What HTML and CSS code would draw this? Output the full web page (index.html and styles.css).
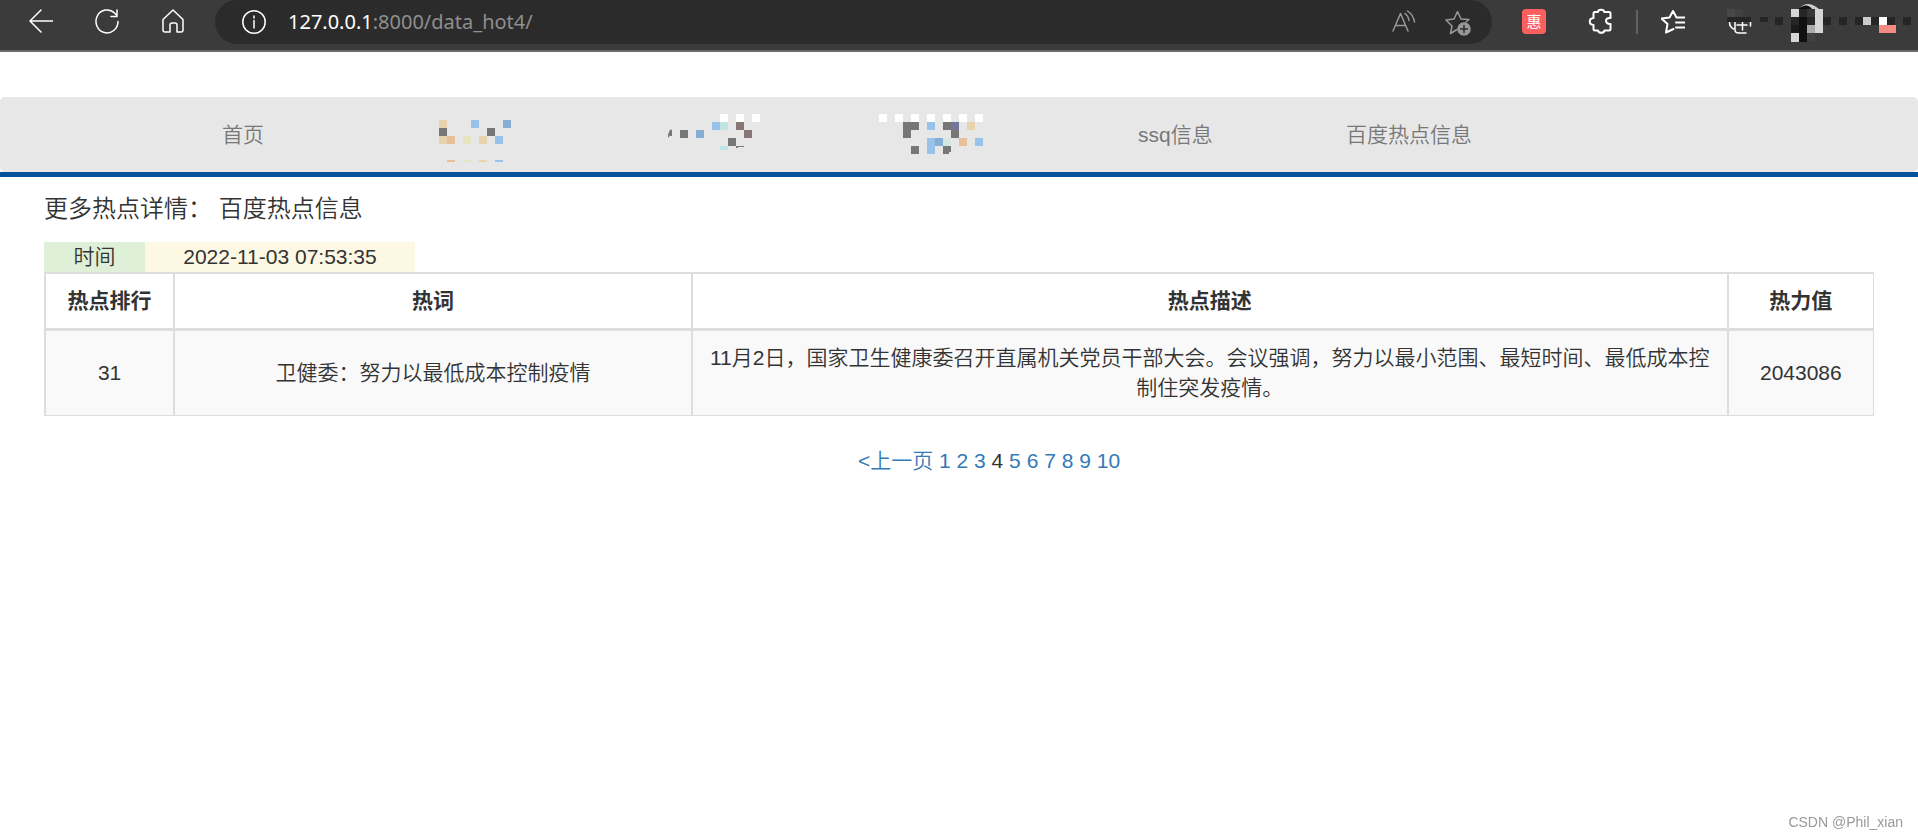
FILE: index.html
```html
<!DOCTYPE html>
<html lang="zh-CN">
<head>
<meta charset="utf-8">
<title>百度热点信息</title>
<link rel="stylesheet" href="styles.css">
</head>
<body>
<header class="toolbar">
  <div class="tools">
    <button class="tool" aria-label="后退"><svg width="24" height="42" viewBox="0 0 24 42"><path d="M12 10L1 21l11 11M1 21h23"/></svg></button>
    <button class="tool" aria-label="刷新"><svg width="24" height="42" viewBox="0 0 24 42"><path d="M23 21.500a11 11.500 0 1 1-3.500-8.500l2.500 2.500M22 10v6.500h-6"/></svg></button>
    <button class="tool" aria-label="主页"><svg width="24" height="42" viewBox="0 0 24 42"><path d="M2 19.500L12 10l10 9.500V30a2 2 0 0 1-2 2h-4v-7a2 2 0 0 0-2-2h-3a2 2 0 0 0-2 2v7H4a2 2 0 0 1-2-2z"/></svg></button>
  </div>
  <div class="address">
    <button class="tool" aria-label="网站信息"><svg width="24" height="42" viewBox="0 0 24 42"><circle cx="12" cy="21" r="11.200"/><path d="M12 19.500V27M12 15v2"/></svg></button>
    <div class="url" role="textbox" aria-label="地址"><span class="host">127.0.0.1</span>:8000/data_hot4/</div>
    <div class="address-end">
      <button class="tool dim" aria-label="朗读"><svg width="24" height="42" viewBox="0 0 24 42"><path d="M1 30L8.500 12.500 16 30M3.500 24.500h10M13 12.500q3.500 2.500 4 7M15.500 10q6 4 7 11"/></svg></button>
      <button class="tool dim" aria-label="收藏"><svg width="26" height="42" viewBox="0 0 26 42"><path d="M12 28.500l-6.500 4L7 25 1 19l8-1L12.500 10.500l3.500 7.500 8 .5-3 2.500"/><circle class="badge" cx="19" cy="28" r="6"/><path class="badge-plus" d="M19 24.500v7M15.500 28h7"/></svg></button>
    </div>
  </div>
  <button class="tool shop" aria-label="惠"><span class="shop-tile">惠</span></button>
  <button class="tool puzzle" aria-label="扩展"><svg width="24" height="42" viewBox="0 0 24 42"><path class="bold" d="M6.500 12H10c.2-3 6-3 6.200 0H21a1.500 1.500 0 0 1 1.500 1.500V18c-6-1-6 6.500 0 6V29a1.500 1.500 0 0 1-1.500 1.500h-4.500c-.5 3-6 3-6.500 0H7A1.500 1.500 0 0 1 5.500 29v-4c-5-.5-5-6.500 0-7v-4.500A1.500 1.500 0 0 1 6.500 12z"/></svg></button>
  <span class="divider"></span>
  <button class="tool favorites" aria-label="收藏夹"><svg width="24" height="42" viewBox="0 0 24 42"><path class="bold" d="M12.500 29L5 32.500l1.500-8.500L.5 18.500l8-1L12 11l3.500 6.500H24M15 22.500h9M15 27.500h9"/></svg></button>
  <svg class="profile" width="198" height="50" viewBox="0 0 198 50" aria-hidden="true">
    <path class="line" d="M9.500 22q0 5 4 7M15 22v8q0 3 4 3h7M22.500 20v10M17 25h10M30.500 22v4"/>
    <path fill="#474747" d="M7 9h8v8H7z"/><path fill="#404040" d="M15 9h8v8h-8z"/>
    <path fill="#252525" d="M7 17h24v5H7zM40 17h8v5h-8zM55 17h8v8h-8zM103 17h8v8h-8zM119 17h8v8h-8zM135 17h8v8h-8zM151 17h8v8h-8zM167 17h8v8h-8zM183 17h8v8h-8z"/>
    <path fill="#ccc" d="M79 9Q87-1 99 9z"/><path fill="#111" d="M78 9q9-7 14 0z"/>
    <path fill="#d5d5d5" d="M71 9h8v8h-8zM71 33h8v9h-8zM95 9h8v24h-8z"/>
    <path fill="#262626" d="M71 17h24v8H71zM79 9h8v8h-8z"/><path fill="#1a1a1a" d="M71 25h8v8h-8z"/>
    <path fill="#101010" d="M79 17h8v25h-8z"/><path fill="#363636" d="M87 9h8v8h-8z"/>
    <path fill="#aaa" d="M87 25h8v8h-8z"/><path fill="#424242" d="M87 33h8v8h-8z"/>
    <path fill="#ccc" d="M143 17h8v8h-8z"/><path fill="#fff" d="M159 17h8v8h-8z"/><path fill="#f28b82" d="M159 25h17v8h-17z"/>
  </svg>
</header>

<nav class="nav">
  <a class="nav-link" href="#">首页</a>
  <a class="nav-link" href="#" aria-label="菜单二"><svg width="74" height="54" viewBox="0 -12 74 54">
    <path fill="#e7d4ae" d="M0 0h8v8H0zM0 16h8v8H0zM40 16h8v8h-8zM40 40h8v2h-8z"/>
    <path fill="#e6c098" d="M8 16h8v8H8zM8 40h8v2H8z"/><path fill="#e5e5c0" d="M24 16h8v8h-8zM24 40h8v2h-8z"/>
    <path fill="#777" d="M0 8h8v8H0zM48 8h8v8h-8z"/>
    <path fill="#99c2ea" d="M32 0h8v8h-8zM56 16h8v8h-8zM56 40h8v2h-8z"/><path fill="#87add5" d="M64 0h8v8h-8z"/></svg></a>
  <a class="nav-link" href="#" aria-label="菜单三"><svg width="94" height="46" viewBox="0 0 94 46">
    <path fill="none" stroke="#777" stroke-width="2" d="M0 25l3-7v6"/>
    <path fill="#fff" d="M52 2h8v8h-8zM68 2h8v8h-8zM84 2h8v8h-8z"/>
    <path fill="#99c2ea" d="M44 10h8v8h-8z"/><path fill="#87add5" d="M28 18h8v8h-8z"/>
    <path fill="#c0e5e5" d="M52 10h8v8h-8zM52 34h8v4h-8z"/>
    <path fill="#777" d="M12 18h8v8h-8zM60 26h8v8h-8z"/><path fill="#877675" d="M68 10h8v8h-8zM76 18h8v8h-8zM68 34h8v1h-6v1h-2z"/></svg></a>
  <a class="nav-link" href="#" aria-label="菜单四"><svg width="106" height="46" viewBox="0 0 106 46">
    <path fill="#fff" d="M0 2h8v8H0zM16 2h8v8h-8zM32 2h8v8h-8zM48 2h8v8h-8zM64 2h8v8h-8zM80 2h8v8h-8zM96 2h8v8h-8z"/>
    <path fill="#777" d="M24 10h16v8h-8v8h-8zM64 10h8v8h-8zM72 18h8v8h-8zM32 34h8v8h-8zM64 34h8v6h-2v2h-6z"/>
    <path fill="#76769d" d="M72 10h8v8h-8z"/><path fill="#e7d4ae" d="M88 10h8v8h-8z"/>
    <path fill="#99c2ea" d="M48 10h8v8h-8zM48 26h8v16h-8zM96 26h8v8h-8z"/><path fill="#87add5" d="M56 26h8v8h-8z"/>
    <path fill="#d5e6e4" d="M64 26h8v8h-8z"/><path fill="#e6c098" d="M80 26h8v8h-8z"/></svg></a>
  <a class="nav-link" href="#">ssq信息</a>
  <a class="nav-link" href="#">百度热点信息</a>
</nav>

<main class="content">
  <h1 class="title">更多热点详情： 百度热点信息</h1>
  <div class="stamp"><span class="stamp-label">时间</span><span class="stamp-value">2022-11-03 07:53:35</span></div>
  <table class="hot">
    <colgroup><col class="c-rank"><col class="c-word"><col class="c-desc"><col class="c-heat"></colgroup>
    <thead><tr><th>热点排行</th><th>热词</th><th>热点描述</th><th>热力值</th></tr></thead>
    <tbody><tr><td>31</td><td>卫健委：努力以最低成本控制疫情</td><td>11月2日，国家卫生健康委召开直属机关党员干部大会。会议强调，努力以最小范围、最短时间、最低成本控制住突发疫情。</td><td>2043086</td></tr></tbody>
  </table>
  <div class="pages">
    <a href="#">&lt;上一页</a>
    <a href="#">1</a>
    <a href="#">2</a>
    <a href="#">3</a>
    <span>4</span>
    <a href="#">5</a>
    <a href="#">6</a>
    <a href="#">7</a>
    <a href="#">8</a>
    <a href="#">9</a>
    <a href="#">10</a>
  </div>
</main>
<div class="watermark">CSDN @Phil_xian</div>
</body>
</html>
```
FILE: styles.css
```css
* { box-sizing: border-box; }

body {
  margin: 0;
  background: #fff;
  color: #333;
  font: 350 21px/30px "Liberation Sans", "Noto Sans CJK SC", sans-serif;
}

a { color: #337ab7; text-decoration: none; }

/* browser bar */
.toolbar {
  display: flex;
  align-items: flex-start;
  height: 52px;
  background: #3b3b3b;
  border-bottom: 2px solid #6b6b6b;
}
.tools { display: flex; gap: 42px; padding: 0 30px 0 29px; }
.tool {
  flex: none;
  display: block;
  padding: 0;
  border: 0;
  background: none;
  font: inherit;
}
.tool svg, .profile { display: block; }
.tool path, .tool circle, .profile .line {
  fill: none;
  stroke: #fff;
  stroke-width: 1.5;
  stroke-linecap: round;
  stroke-linejoin: round;
}
.tool .bold { stroke-width: 2; }
.dim path, .dim circle { stroke: #999; }
.tool .badge { fill: #999; }
.tool .badge-plus { stroke: #2b2b2b; }
.address {
  flex: 1;
  display: flex;
  height: 44px;
  padding: 0 21px 0 27px;
  background: #2b2b2b;
  border-radius: 22px;
}
.url {
  flex: 1;
  padding-left: 22px;
  color: #8f8f8f;
  font: 400 20px/43px "Noto Sans", sans-serif;
}
.host { color: #fff; }
.address-end { display: flex; gap: 29px; }
.shop { margin: 9px 42px 0 30px; }
.shop-tile {
  display: block;
  width: 24px;
  height: 25px;
  border-radius: 4px;
  background: #fb5f60;
  color: #fff;
  font: 400 15px/24px "Noto Sans CJK SC", sans-serif;
  text-align: center;
}
.divider { flex: none; width: 2px; height: 24px; margin: 10px 23px 0 24px; background: #626262; }
.favorites { margin-right: 35px; }
.profile { flex: none; }

/* site navigation */
.nav {
  display: grid;
  grid-template-columns: 217fr 229fr 211fr 259fr 208fr 350fr;
  align-items: center;
  height: 75px;
  margin-top: 45px;
  padding: 0 222px;
  background: #e7e7e7;
  border-radius: 5px;
}
.nav-link { color: #777; }
.nav-link svg { display: block; }
.content { padding: 0 44px; border-top: 5px solid #00529b; }

.title {
  margin: 0;
  padding: 17px 0 18px;
  font-size: 24px;
  font-weight: 350;
  line-height: 30px;
}
.stamp { display: flex; text-align: center; }
.stamp-label { width: 101px; background: #dff0d8; }
.stamp-value { width: 270px; background: #fcf8e3; }

.hot {
  width: 100%;
  table-layout: fixed;
  border-collapse: separate;
  border-spacing: 0;
  border: solid #ddd;
  border-width: 0 1px 1px 0;
  text-align: center;
}
.c-rank { width: 7.06%; }
.c-word { width: 28.3%; }
.c-desc { width: 56.64%; }
.c-heat { width: 8%; }
.hot th, .hot td { padding: 12px; border-left: 2px solid #ddd; }
.hot th { border-top: 2px solid #ddd; border-bottom: 3px solid #ddd; font-weight: 700; }
.hot td { background: #f9f9f9; }

.pages { padding: 30px 0 30px 60px; text-align: center; }

.watermark {
  position: fixed;
  right: 15px;
  bottom: 6px;
  color: #999;
  font-size: 14px;
  line-height: 20px;
}
```
